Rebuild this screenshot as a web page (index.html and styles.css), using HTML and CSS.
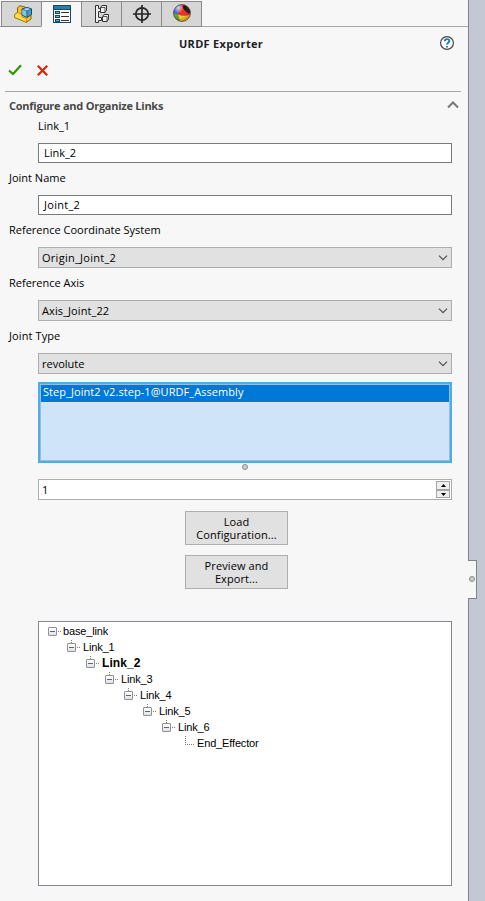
FILE: index.html
```html
<!DOCTYPE html>
<html lang="en">
<head>
<meta charset="utf-8">
<title>URDF Exporter</title>
<link rel="stylesheet" href="styles.css">
</head>
<body>
<main class="panel">
  <nav class="tabs">
    <div class="tab">
      <svg width="18" height="18" viewBox="0 0 18 18"><path d="M.7 9.500L3.500 7.500V2.500L6 .7L11 2L17 6V14L12.500 17.300L.7 12.500Z" fill="#f5c02a" stroke="#8a6508"/><path d="M.7 9.500L3.500 7.500L8 9.500V12L12.500 13.500V17.300L.7 12.500Z" fill="#ffdc4a" stroke="#a87a0c" stroke-width=".7"/><path d="M8 4L13 2.500L17.500 4V9.500L13 12.500L8 10Z" fill="#4b9bc6" stroke="#174c6d"/><path d="M8 4L13 6L17.500 4L13 2.500Z" fill="#a8dcf4" stroke="#174c6d" stroke-width=".7"/><path d="M8.300 4.500L12.700 6.300V11.700L8.300 9.700Z" fill="#85c4e4"/><path d="M13 6V12" stroke="#174c6d" stroke-width=".8"/></svg>
    </div>
    <div class="tab tab-active">
      <svg width="18" height="18" viewBox="0 0 18 18" shape-rendering="crispEdges"><path d="M.5 .5H17.5V17.5H.5Z" fill="#fff" stroke="#174866"/><path d="M1 1H17V4H1Z" fill="#2c7da6"/><path d="M0 4H18V5H0Z" fill="#174866"/><path d="M2 6H7V9H2ZM2 10H7V13H2ZM2 14H7V17H2Z" fill="#174866"/><path d="M3 7H6V8H3ZM3 11H6V12H3ZM3 15H6V16H3Z" fill="#62b4db"/><path d="M8 7H16V8H8ZM8 11H16V12H8ZM8 15H16V16H8Z" fill="#333"/></svg>
    </div>
    <div class="tab">
      <svg width="14" height="18" viewBox="0 0 14 18" fill="#eee" stroke="#333"><path d="M.5 .5H3.500V3.500H5.500V6.500H3.500V12.500H6.500V15.500H3.500V17.500H.5Z"/><path d="M5.500 2.500L7 .5H11.500V5L10 7.500H5.500ZM7.500 11.500L9 9.500H13.500V14L12 16.500H7.500Z"/><path d="M5.500 2.500H10V7.500M7.500 11.500H12V16.500" fill="none" stroke-width=".8"/></svg>
    </div>
    <div class="tab">
      <svg width="18" height="18" viewBox="0 0 18 18" fill="none" stroke="#262626" stroke-width="1.700"><circle cx="9" cy="9" r="6.200"/><path d="M9 0V18M0 9H18"/></svg>
    </div>
    <div class="tab">
      <svg class="icon-ball" width="18" height="18" viewBox="0 0 18 18"><defs><radialGradient id="shine" cx=".3" cy=".2" r=".8"><stop offset="0" stop-color="#fff" stop-opacity=".75"/><stop offset=".4" stop-color="#fff" stop-opacity="0"/><stop offset="1" stop-color="#000" stop-opacity=".3"/></radialGradient></defs><circle cx="9" cy="9" r="8.500" fill="#e92825"/><path d="M9 .5A8.500 8.500 0 0 0 .5 9L5 10.500L6 4Z" fill="#2c70d1"/><path d="M.5 9A8.500 8.500 0 0 0 7 17.300L5 10.500Z" fill="#3dad32"/><path d="M5 10.500C9 12.500 14 12 17.300 10.500A8.500 8.500 0 0 1 7 17.300Z" fill="#ffd421"/><ellipse cx="13.500" cy="5.200" rx="2.200" ry="4.800" transform="rotate(-40 13.500 5.200)" fill="#111"/><circle cx="9" cy="9" r="8.500" fill="url(#shine)" stroke="#533" stroke-width=".6"/></svg>
    </div>
  </nav>

  <header class="title-row">
    <h1 class="title">URDF Exporter</h1>
    <svg class="help" width="14" height="14" viewBox="0 0 14 14"><circle cx="7" cy="7" r="6.400" fill="#fff" stroke="#444" stroke-width="1.200"/><path d="M4.800 5.200C4.800 2.500 9.300 2.500 9.300 5C9.300 6.700 7 6.600 7 8.600M7 10V11.600" fill="none" stroke="#1d7ba8" stroke-width="1.900"/></svg>
  </header>
  <div class="actions">
    <svg width="14" height="12" viewBox="0 0 14 12"><path d="M1 6.500L5 10L13 1.200" fill="none" stroke="#2f9800" stroke-width="2.200"/></svg>
    <svg width="11" height="11" viewBox="0 0 11 11"><path d="M.8 .8L10.200 10.200M10.200 .8L.8 10.200" stroke="#dc2405" stroke-width="2.200"/></svg>
  </div>

  <section class="group">
    <div class="group-head">
      <h2 class="group-title">Configure and Organize Links</h2>
      <svg width="12" height="8" viewBox="0 0 12 8"><path d="M1 6.500L6 1.500L11 6.500" fill="none" stroke="#777" stroke-width="2"/></svg>
    </div>
    <div class="label label-indent">Link_1</div>
    <div class="field">Link_2</div>
    <div class="label">Joint Name</div>
    <div class="field wide">Joint_2</div>
    <div class="label">Reference Coordinate System</div>
    <div class="field select"><span class="wide">Origin_Joint_2</span><svg width="10" height="6" viewBox="0 0 10 6"><path d="M1 .7L5 4.700L9 .7" fill="none" stroke="#505050" stroke-width="1.200"/></svg></div>
    <div class="label label-select">Reference Axis</div>
    <div class="field select"><span class="slightly-wide">Axis_Joint_22</span><svg width="10" height="6" viewBox="0 0 10 6"><path d="M1 .7L5 4.700L9 .7" fill="none" stroke="#505050" stroke-width="1.200"/></svg></div>
    <div class="label label-select slightly-wide">Joint Type</div>
    <div class="field select"><span>revolute</span><svg width="10" height="6" viewBox="0 0 10 6"><path d="M1 .7L5 4.700L9 .7" fill="none" stroke="#505050" stroke-width="1.200"/></svg></div>

    <div class="listbox"><div class="list-item">Step_Joint2 v2.step-1@URDF_Assembly</div></div>
    <div class="grip-row"><i class="grip"></i></div>

    <div class="field spinner">
      <span>1</span>
      <div class="spin-buttons">
        <div class="spin"><svg width="5" height="3" viewBox="0 0 5 3"><path d="M0 3L2.500 0L5 3Z"/></svg></div>
        <div class="spin"><svg width="5" height="3" viewBox="0 0 5 3"><path d="M0 0L2.500 3L5 0Z"/></svg></div>
      </div>
    </div>

    <div class="buttons">
      <button class="button">Load<br>Configuration...</button>
      <button class="button">Preview and<br>Export...</button>
    </div>

    <div class="tree">
      <div class="node"><i class="toggle"></i><span>base_link</span></div>
      <div class="branch"><div class="node"><i class="toggle"></i><span>Link_1</span></div>
        <div class="branch"><div class="node node-current"><i class="toggle"></i><span>Link_2</span></div>
          <div class="branch"><div class="node"><i class="toggle"></i><span>Link_3</span></div>
            <div class="branch"><div class="node"><i class="toggle"></i><span>Link_4</span></div>
              <div class="branch"><div class="node"><i class="toggle"></i><span>Link_5</span></div>
                <div class="branch"><div class="node"><i class="toggle"></i><span>Link_6</span></div>
                  <div class="branch"><div class="node"><i class="leaf"></i><span>End_Effector</span></div></div>
                </div>
              </div>
            </div>
          </div>
        </div>
      </div>
    </div>
  </section>
</main>
<aside class="gutter"><div class="handle"><i class="grip"></i></div></aside>
</body>
</html>
```
FILE: styles.css
```css
* { box-sizing: border-box; }
body {
  margin: 0;
  width: 485px;
  height: 901px;
  display: flex;
  overflow: hidden;
  background: #f7f7f7;
  color: #000;
  font: 11px/15px "Open Sans", "Noto Sans", sans-serif;
}
svg { display: block; flex: none; }
h1, h2 { margin: 0; font-size: 11px; line-height: 15px; font-weight: 700; }
span { white-space: nowrap; }
.wide { letter-spacing: .28px; }
.slightly-wide { letter-spacing: .1px; }

.panel { width: 468px; flex: none; }
.tabs { display: flex; height: 27px; padding: 1px 0 0 1px; border-bottom: 1px solid #a8a8a8; }
.tab {
  width: 41px;
  height: 26px;
  margin-right: -1px;
  display: flex;
  align-items: center;
  justify-content: center;
  background: #d6d6d6;
  border: 1px solid #8a8a8a;
}
.tab-active { background: #f7f7f7; border-bottom-color: #f7f7f7; }
.tab:first-child svg { margin-left: 3px; }
.icon-ball { margin-top: -2px; }

.title-row { display: flex; align-items: center; height: 32px; padding: 0 14px 0 179px; justify-content: space-between; }
.title { color: #1e1e28; letter-spacing: .3px; }
.actions { display: flex; align-items: center; gap: 15px; height: 22px; padding-left: 8px; }

.group { margin-top: 10px; }
.group-head { display: flex; justify-content: space-between; height: 27px; margin: 0 7px 0 5px; padding: 6px 2px 0 4px; border-top: 1px solid #a8a8a8; }
.group-head svg { margin-top: 3px; }
.group-title { color: #484848; letter-spacing: -.25px; }

.label { height: 32px; padding: 7px 0 0 9px; }
.label-indent { height: 25px; padding: 0 0 0 38px; }
.label-select { height: 32px; padding-top: 7px; }

.field {
  display: flex;
  align-items: center;
  width: 414px;
  height: 20px;
  margin-left: 38px;
  padding: 0 0 1px 5px;
  background: #fff;
  border: 1px solid #7a7a7a;
}
.select { height: 21px; padding: 0 3px 0 3px; justify-content: space-between; background: #e1e1e1; border-color: #adadad; }

.listbox { width: 414px; height: 81px; margin: 8px 0 0 38px; border: 2px solid #4fade3; background: #cfe4f8; box-shadow: inset 0 0 0 1px #8fc0e8; }
.list-item { height: 17px; margin: 1px; padding-left: 2px; background: #0078d7; color: #fff; line-height: 14px; letter-spacing: .06px; }
.grip-row { display: flex; justify-content: center; height: 16px; padding: 1px 0 0 22px; }
.grip { display: block; width: 6px; height: 6px; border: 1px solid #8c8c8c; border-radius: 50%; background: #ccc; }

.spinner { height: 21px; padding: 0 1px 0 3px; justify-content: space-between; border-color: #abadb3; }
.spin-buttons { display: flex; flex-direction: column; }
.spin { display: flex; align-items: center; justify-content: center; width: 14px; height: 9px; border: 1px solid #a5a5a5; background: #eee; }
.spin:last-child { height: 8px; }

.buttons { display: flex; flex-direction: column; gap: 10px; margin: 11px 0 0 185px; }
.button { width: 103px; height: 34px; padding: 0 0 1px; border: 1px solid #adadad; background: #e1e1e1; color: #000; font: inherit; line-height: 13px; letter-spacing: .1px; }

.tree { width: 414px; height: 265px; margin: 32px 0 0 38px; padding: 2px 0 0 9px; background: #fff; border: 1px solid #828790; font: 11px/15px "Liberation Sans", Arial, sans-serif; letter-spacing: -.15px; }
.branch { margin-left: 19px; }
.node { display: flex; height: 16px; }
.node span { margin-left: 6px; }
.branch > .node span { margin-left: 7px; }
.node-current { font-size: 12px; font-weight: 700; letter-spacing: .1px; }
.toggle {
  position: relative;
  width: 9px;
  height: 9px;
  margin-top: 3px;
  border: 1px solid #919191;
  border-radius: 1px;
  background: linear-gradient(#4b63a7, #4b63a7) center / 5px 1px no-repeat, linear-gradient(#fff, #e2e2e2);
}
.toggle::after { content: ""; position: absolute; left: 9px; top: 3px; width: 3px; height: 1px; background: repeating-linear-gradient(90deg, #808080 0 1px, transparent 1px 2px); }
.branch > .node > .toggle::before { content: ""; position: absolute; left: 3px; top: -4px; width: 1px; height: 3px; background: repeating-linear-gradient(#808080 0 1px, transparent 1px 2px); }
.leaf { width: 9px; height: 9px; margin-left: 4px; background: repeating-linear-gradient(#808080 0 1px, transparent 1px 2px) left / 1px 100% no-repeat, repeating-linear-gradient(90deg, #808080 0 1px, transparent 1px 2px) bottom / 100% 1px no-repeat; }
.branch > .node .leaf + span { margin-left: 3px; }

.gutter { width: 17px; flex: none; background: #c4c8d4; border-left: 1px solid #858585; padding-top: 560px; }
.handle { display: flex; align-items: center; width: 9px; height: 39px; margin-left: -1px; border: 1px solid #858585; border-left: 0; background: #f7f7f7; }
.handle .grip { margin: -2px 0 0 1px; }
```
